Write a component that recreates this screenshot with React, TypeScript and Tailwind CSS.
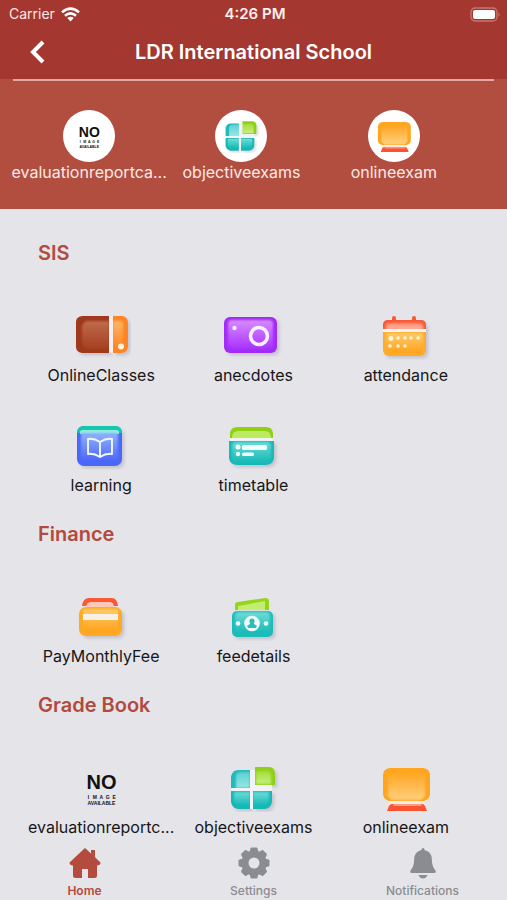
import React from "react";

type IconName =
  | "online"
  | "anecdotes"
  | "attendance"
  | "learning"
  | "timetable"
  | "pay"
  | "fee"
  | "none"
  | "objective"
  | "exam";

type Item = { label: string; icon: IconName };

const quickItems: Item[] = [
  { label: "evaluationreportca...", icon: "none" },
  { label: "objectiveexams", icon: "objective" },
  { label: "onlineexam", icon: "exam" },
];

const sections: { title: string; items: Item[] }[] = [
  {
    title: "SIS",
    items: [
      { label: "OnlineClasses", icon: "online" },
      { label: "anecdotes", icon: "anecdotes" },
      { label: "attendance", icon: "attendance" },
      { label: "learning", icon: "learning" },
      { label: "timetable", icon: "timetable" },
    ],
  },
  {
    title: "Finance",
    items: [
      { label: "PayMonthlyFee", icon: "pay" },
      { label: "feedetails", icon: "fee" },
    ],
  },
  {
    title: "Grade Book",
    items: [
      { label: "evaluationreportc...", icon: "none" },
      { label: "objectiveexams", icon: "objective" },
      { label: "onlineexam", icon: "exam" },
    ],
  },
];

function Gradients() {
  const list: [string, string, string][] = [
    ["gBrown", "#bf6b4e", "#a5401f"],
    ["gOrange", "#ffb56a", "#ff8420"],
    ["gPurple", "#d78bff", "#a932ff"],
    ["gRed", "#ff8a74", "#ffb9a6"],
    ["gAmber", "#ffcb6b", "#ffa21c"],
    ["gScreen", "#ffa51f", "#ffcf7d"],
    ["gBlue", "#8fb4ff", "#4a63fa"],
    ["gTeal", "#6fdcd8", "#16bab6"],
    ["gTealLight", "#5cd2d2", "#98e6e4"],
    ["gLime", "#a5dc3c", "#c6f07c"],
  ];
  return (
    <svg width="0" height="0" className="absolute" aria-hidden="true">
      <defs>
        {list.map(([id, from, to]) => (
          <linearGradient key={id} id={id} x1="0" y1="0" x2="0" y2="1">
            <stop offset="0" stopColor={from} />
            <stop offset="1" stopColor={to} />
          </linearGradient>
        ))}
        <filter id="tileShadow" x="-20%" y="-20%" width="150%" height="150%">
          <feDropShadow dx="2.5" dy="2.5" stdDeviation="1.5" floodColor="#6b6b85" floodOpacity="0.26" />
        </filter>
        <filter id="soft" x="-20%" y="-20%" width="140%" height="140%">
          <feGaussianBlur stdDeviation="0.8" />
        </filter>
      </defs>
    </svg>
  );
}

const art: Record<IconName, React.ReactNode> = {
  online: (
    <>
      <g filter="url(#tileShadow)">
        <path d="M11 4H38V41H11Q5 40 5 35V10Q5 5 11 4Z" fill="#9f381b" />
        <path d="M42 4H51Q57 5 57 11V34Q57 40 51 41H42Z" fill="#ff8421" />
      </g>
      <path d="M15 9H38V37H15L11 33V13Z" fill="url(#gBrown)" filter="url(#soft)" />
      <path d="M42 9H49Q52 9 52 12V33Q52 36 49 36H42Z" fill="url(#gOrange)" filter="url(#soft)" />
      <path d="M38 4H42V41H38Z" fill="#f3eef0" />
      <circle cx="50" cy="34.5" r="3" fill="#fff4e6" />
    </>
  ),
  anecdotes: (
    <>
      <rect x="1" y="5" width="53" height="36" rx="6" fill="#a32cf7" filter="url(#tileShadow)" />
      <rect x="5" y="8" width="45" height="29" rx="4" fill="url(#gPurple)" filter="url(#soft)" />
      <circle cx="36" cy="24" r="8.5" fill="none" stroke="#fbf0ff" strokeWidth="3.6" />
      <circle cx="11.5" cy="16" r="2.2" fill="#fbf0ff" />
    </>
  ),
  attendance: (
    <>
      <rect x="7" y="8" width="43" height="36" rx="6" fill="#ffab2c" filter="url(#tileShadow)" />
      <path d="M7 18V13Q7 8 12 8H16V6Q16 4 18 4T20 6V8H36V6Q36 4 38 4T40 6V8H45Q50 8 50 13V18Z" fill="#fb5936" />
      <path d="M10 18V14Q10 11 13 11H44Q47 11 47 14V18Z" fill="url(#gRed)" filter="url(#soft)" />
      <path d="M7 17H50V20H7Z" fill="#fff3ec" />
      <path d="M10 21H47V37Q47 41 43 41H14Q10 41 10 37Z" fill="url(#gAmber)" filter="url(#soft)" />
      <g fill="#fff5df">
        <circle cx="15" cy="26.5" r="2.4" />
        {[22, 29, 35, 42].map((x) => (
          <circle key={x} cx={x} cy="26" r="1.7" />
        ))}
        {[14, 22, 29].map((x) => (
          <circle key={x} cx={x} cy="34" r="1.7" />
        ))}
      </g>
    </>
  ),
  learning: (
    <>
      <rect x="6" y="4" width="45" height="40" rx="7" fill="#4a68f5" filter="url(#tileShadow)" />
      <path d="M6 11Q6 4 13 4H44Q51 4 51 11Z" fill="#14c7ad" />
      <path d="M9 12V10Q9 8 12 8H45Q48 8 48 10V12Z" fill="#8eeedb" />
      <path d="M10 11H47V36Q47 40 43 40H14Q10 40 10 36Z" fill="url(#gBlue)" filter="url(#soft)" />
      <path
        d="M29 20Q23 16 17 17V32Q23 31 29 35Q35 31 41 32V17Q35 16 29 20ZM29 20V34"
        fill="none"
        stroke="#f4f7ff"
        strokeWidth="1.9"
        strokeLinejoin="round"
      />
    </>
  ),
  timetable: (
    <>
      <path d="M7 16V11Q8 5 14 5H43Q49 5 50 11V16Z" fill="#8fd010" />
      <path d="M9 16Q9 9 15 9H42Q48 9 48 16Z" fill="#bceb62" />
      <rect x="7" y="16" width="43" height="4" fill="#f2f5f3" />
      <path d="M6 19H51V36Q50 43 43 43H14Q7 43 6 36Z" fill="#19b9b8" filter="url(#tileShadow)" />
      <rect x="9" y="20" width="39" height="20" rx="4" fill="url(#gTeal)" filter="url(#soft)" />
      <g fill="#eefcfb">
        <circle cx="15" cy="25" r="2.5" />
        <circle cx="15" cy="32" r="2.2" />
        <rect x="19" y="23" width="25" height="5" rx="1.5" />
        <rect x="19" y="30.5" width="12" height="3.5" rx="1.5" />
      </g>
    </>
  ),
  pay: (
    <>
      <path d="M11 13Q12 5 18 5H41Q46 5 47 13Z" fill="#fb5936" />
      <path d="M15 15Q15 9 20 9H39Q43 9 43 15Z" fill="#ffc9b8" />
      <rect x="8" y="14" width="43" height="29" rx="7" fill="#ffa922" filter="url(#tileShadow)" />
      <path d="M12 16H47V35Q47 39 43 39H16Q12 39 12 35Z" fill="url(#gAmber)" filter="url(#soft)" />
      <rect x="12" y="21" width="35" height="6" fill="#f7f0e5" />
    </>
  ),
  fee: (
    <>
      <path d="M12 17V12Q12 9 15 9L42 5Q46 5 46 8V17Z" fill="#94d41a" />
      <path d="M15 17V13L42 8V17Z" fill="#c2ee70" />
      <rect x="9" y="18" width="41" height="26" rx="5" fill="#1cbcb8" filter="url(#tileShadow)" />
      <rect x="12" y="19" width="35" height="21" rx="4" fill="url(#gTeal)" filter="url(#soft)" />
      <circle cx="29" cy="30.5" r="7.8" fill="#edfbfa" />
      <circle cx="29" cy="28" r="2.6" fill="#31b9bd" />
      <path d="M27.5 29H30.5L31 31L34 33L32.5 35H25.5L24 33L27 31Z" fill="#31b9bd" />
      <circle cx="15" cy="30.5" r="2.3" fill="#edfbfa" />
      <circle cx="43" cy="30.5" r="2.3" fill="#edfbfa" />
    </>
  ),
  none: (
    <g fill="#111" fontFamily="Liberation Sans, sans-serif" fontWeight="700" textAnchor="middle">
      <text x="30.5" y="25" fontSize="20">NO</text>
      {["I", "M", "A", "G", "E"].map((letter, i) => (
        <text key={letter} x={17.5 + i * 6.4} y="34.5" fontSize="5">
          {letter}
        </text>
      ))}
      <text x="30.5" y="40.5" fontSize="5">AVAILABLE</text>
    </g>
  ),
  objective: (
    <>
      <g filter="url(#tileShadow)">
        <path d="M27 6V24H8V12Q10 6 15 6Z" fill="#22b9bb" />
        <path d="M32 3H46Q52 3 52 10V21H32Z" fill="#8fcf14" />
        <path d="M8 27H27V45H15Q9 44 8 38Z" fill="#19b8b6" />
        <path d="M30 27H49V38Q48 44 42 45H30Z" fill="#19b8b6" />
      </g>
      <path d="M27 8V24H13V12Q14 8 18 8Z" fill="url(#gTealLight)" filter="url(#soft)" />
      <path d="M33 7H45Q48 8 48 12V20H33Z" fill="url(#gLime)" filter="url(#soft)" />
      <path d="M11 28H27V41H15Q12 40 11 37Z" fill="url(#gTeal)" filter="url(#soft)" />
      <path d="M30 28H46V37Q45 41 42 41H30Z" fill="url(#gTeal)" filter="url(#soft)" />
      <path d="M27 6H32V21H49V27H30V45H27V27H8V24H27Z" fill="#f1f3f6" />
    </>
  ),
  exam: (
    <>
      <path d="M14 4H47Q54 5 54 11V30Q54 35 48 37H13Q7 35 7 30V11Q7 5 14 4Z" fill="#ffa51f" />
      <path d="M16 8H45Q49 8 49 12V32L45 36H16L12 32V12Q12 8 16 8Z" fill="url(#gScreen)" filter="url(#soft)" />
      <path d="M14 37H48L49 41H12Z" fill="#fbe9e2" />
      <path d="M13 42Q14 40 16 40H46Q48 40 49 42L51 47H11Z" fill="#f9542f" />
      <path d="M18 40H45L46 42H17Z" fill="#fb9a84" />
    </>
  ),
};

function TileIcon({ name, className }: { name: IconName; className: string }) {
  return (
    <svg viewBox="0 0 60 48" className={className} aria-hidden="true">
      {art[name]}
    </svg>
  );
}

function StatusBar() {
  return (
    <div className="grid h-7 grid-cols-3 items-center pl-[9px] pr-[6px] text-white">
      <div className="flex items-center gap-[6px] text-[14px] leading-5 text-[#ffe6e2]">
        <span>Carrier</span>
        <svg viewBox="0 0 19 15" className="h-[15px] w-[19px]" aria-hidden="true">
          <g fill="none" stroke="#fff" strokeWidth="2.6">
            <path d="M1 5.4Q9.5 -2.2 18 5.4" />
            <path d="M4 8.8Q9.5 3.8 15 8.8" />
          </g>
          <path d="M6.3 11Q9.5 8.3 12.7 11L9.5 14.4Z" fill="#fff" />
        </svg>
      </div>
      <div className="text-center text-[15px] font-semibold leading-5 text-[#fff0ee]">4:26 PM</div>
      <svg viewBox="0 0 31 15" className="h-[15px] w-[31px] justify-self-end" aria-hidden="true">
        <rect x="1" y="1" width="26" height="13" rx="4" fill="none" stroke="#c8766f" strokeWidth="1.3" />
        <rect x="3" y="3" width="22" height="9" rx="2" fill="#fff" />
        <path d="M28.5 5.5Q31 7.5 28.5 9.5Z" fill="#c8766f" />
      </svg>
    </div>
  );
}

function Tile({ item }: { item: Item }) {
  return (
    <button type="button" className="flex flex-col items-center pb-6 pt-[13px]">
      <TileIcon name={item.icon} className="h-12 w-[60px]" />
      <span className="mt-[5px] whitespace-nowrap text-[16px] leading-5 text-[#161618]">{item.label}</span>
    </button>
  );
}

const tabs = [
  {
    label: "Home",
    active: true,
    icon: (
      <path
        d="M16 1L22 6.5V3H26V10.2L31.5 15.5Q31.5 18.5 28 18.5V28.5Q28 31 25.5 31H19V22H13V31H6.5Q4 31 4 28.5V18.5Q0.5 18.5 0.5 15.5Z"
        fill="currentColor"
      />
    ),
  },
  {
    label: "Settings",
    active: false,
    icon: (
      <>
        <circle cx="16" cy="16" r="9" fill="none" stroke="currentColor" strokeWidth="7" />
        {[0, 45, 90, 135, 180, 225, 270, 315].map((a) => (
          <path
            key={a}
            d="M11.5 5L12.5 1.5Q12.8 0.5 13.5 0.5H18.5Q19.2 0.5 19.5 1.5L20.5 5Z"
            fill="currentColor"
            transform={`rotate(${a} 16 16)`}
          />
        ))}
      </>
    ),
  },
  {
    label: "Notifications",
    active: false,
    icon: (
      <path
        d="M16 1Q17.5 1 17.5 3Q24.5 4.5 24.8 12Q25 20 28.5 23.5Q29.5 26 27 26H5Q2.5 26 3.5 23.5Q7 20 7.2 12Q7.5 4.5 14.5 3Q14.5 1 16 1ZM11.5 28H20.5Q19 31.5 16 31.5T11.5 28Z"
        fill="currentColor"
      />
    ),
  },
];

export default function App() {
  return (
    <div className="flex h-screen flex-col bg-[#e5e4e9] font-['Inter','Liberation_Sans',sans-serif]">
      <Gradients />
      <header className="shrink-0 bg-[#a43730]">
        <StatusBar />
        <div className="grid h-[51px] grid-cols-[48px_1fr_48px] items-center pb-[3px] text-white">
          <button type="button" aria-label="Back" className="flex justify-end">
            <svg viewBox="0 0 20 26" className="h-[26px] w-5" aria-hidden="true">
              <path d="M15 3L5 13L15 23" fill="none" stroke="#fff" strokeWidth="4" />
            </svg>
          </button>
          <h1 className="text-center text-[20px] font-semibold leading-6">LDR International School</h1>
        </div>
      </header>

      <section aria-label="Quick access" className="shrink-0 bg-[#b14e40] pb-[27px]">
        <div className="mx-[13px] h-[2px] bg-[#e3aaa3]" />
        <div className="grid grid-cols-3 pl-[13px] pr-[37px] pt-[29px]">
          {quickItems.map((item) => (
            <button key={item.label} type="button" className="flex flex-col items-center">
              <span className="flex size-[52px] items-center justify-center rounded-full bg-white">
                <TileIcon name={item.icon} className="h-[34px] w-[42px]" />
              </span>
              <span className="whitespace-nowrap text-[16px] leading-5 text-[#ffe9e4]">{item.label}</span>
            </button>
          ))}
        </div>
      </section>

      <main className="min-h-0 flex-1 overflow-y-auto pt-[29px] [scrollbar-width:none]">
        {sections.map((section) => (
          <section key={section.title}>
            <h2 className="mb-[31px] pl-[38px] text-[20px] font-semibold leading-[30px] text-[#b24a3d]">
              {section.title}
            </h2>
            <div className="grid grid-cols-3 px-[25px]">
              {section.items.map((item) => (
                <Tile key={item.label} item={item} />
              ))}
            </div>
          </section>
        ))}
      </main>

      <nav className="grid h-[54px] shrink-0 grid-cols-3">
        {tabs.map((tab) => (
          <a
            key={tab.label}
            href="#"
            aria-current={tab.active ? "page" : undefined}
            className={
              tab.active
                ? "flex flex-col items-center pt-px font-semibold text-[#b34b3e]"
                : "flex flex-col items-center pt-px font-medium text-[#8b8b92]"
            }
          >
            <svg viewBox="0 0 32 32" className="size-8" aria-hidden="true">
              {tab.icon}
            </svg>
            <span className="mt-1 text-[12px] leading-4">{tab.label}</span>
          </a>
        ))}
      </nav>
    </div>
  );
}
